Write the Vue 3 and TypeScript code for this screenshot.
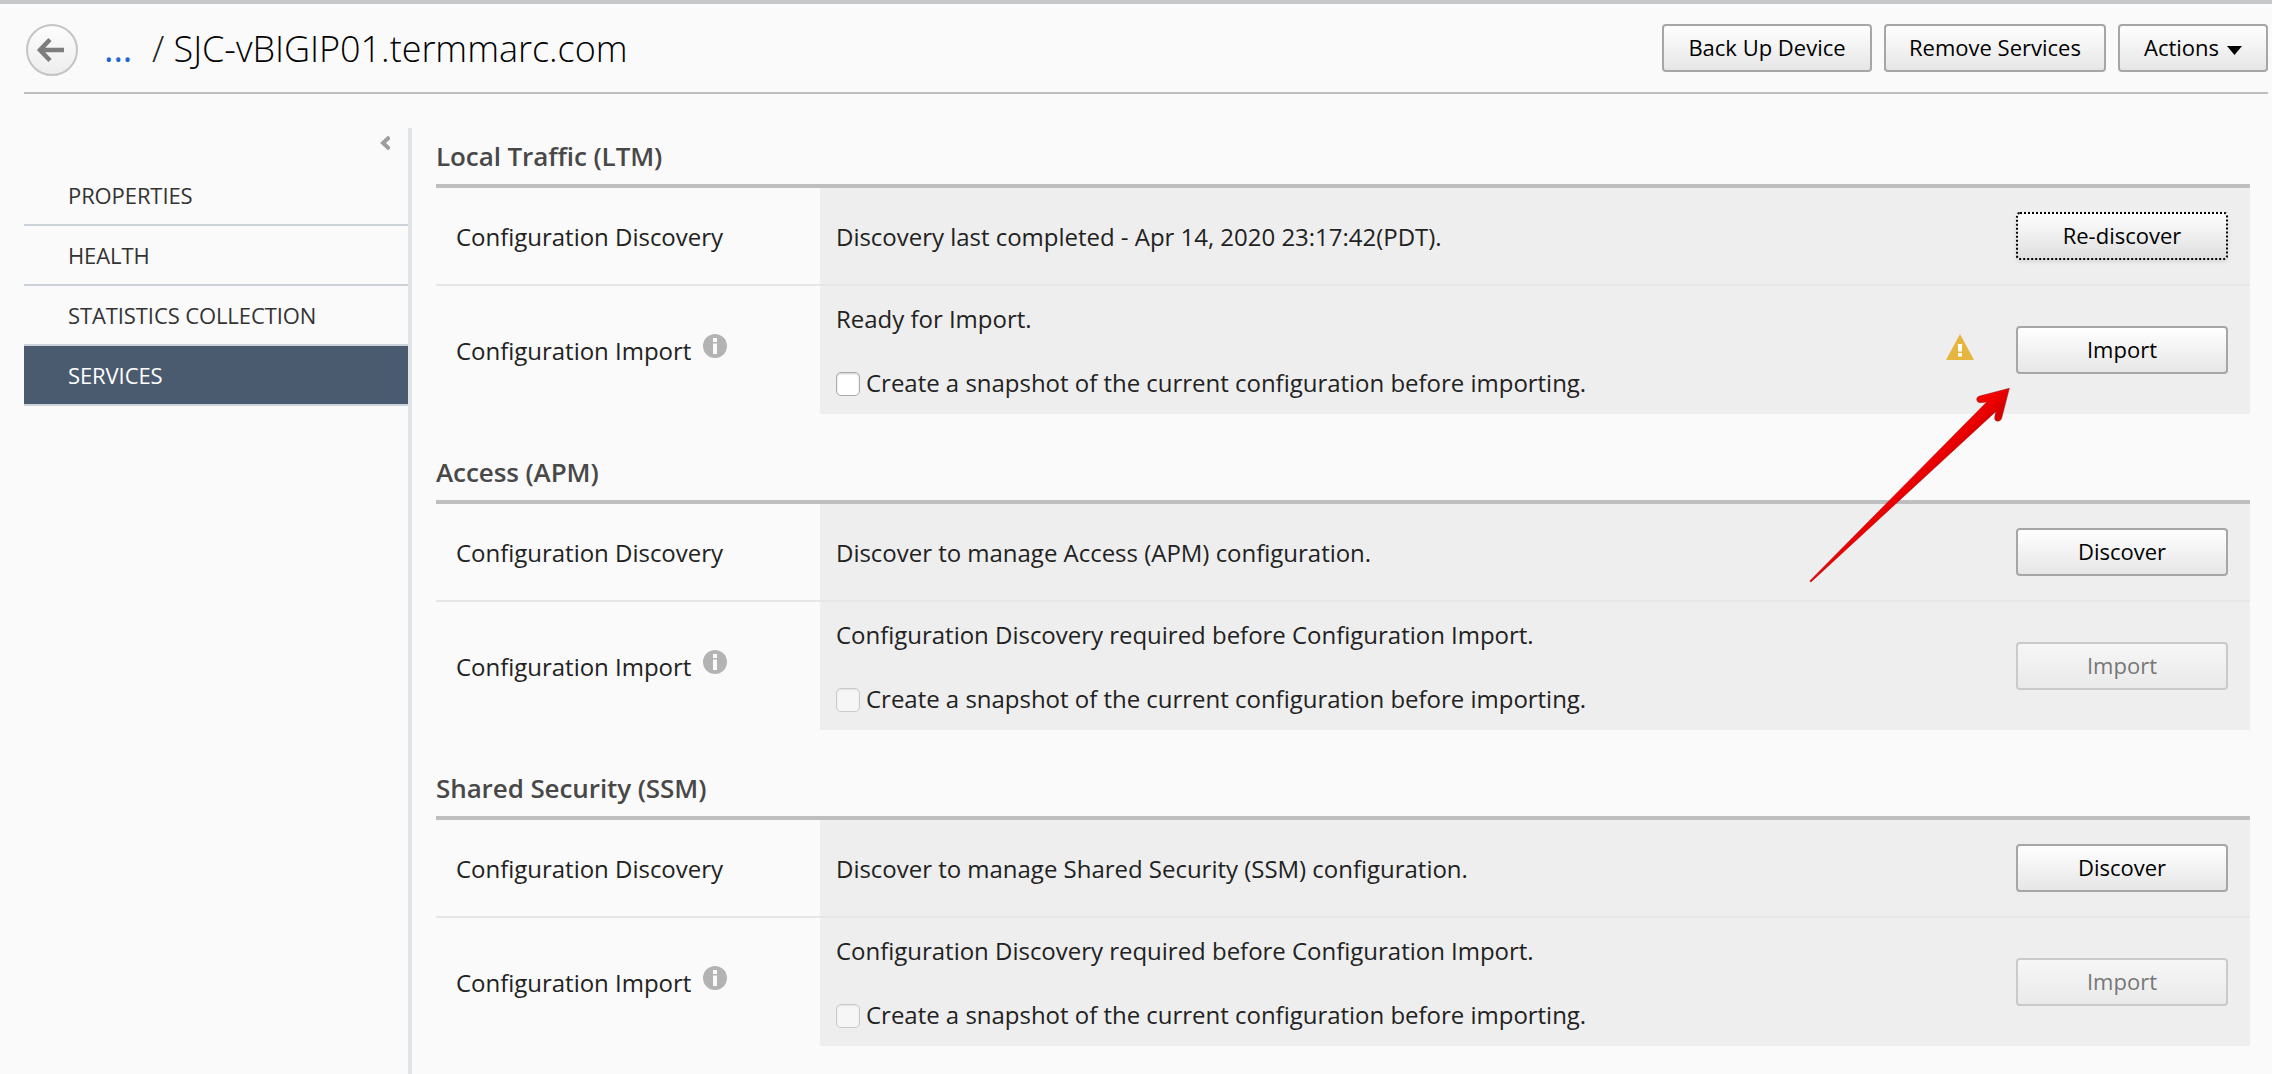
<script setup lang="ts">
import { ref } from 'vue'

interface Service {
  title: string
  discoveryStatus: string
  discoverLabel: string
  importStatus: string
  ready: boolean
  snapshot: boolean
}

const navItems: string[] = ['PROPERTIES', 'HEALTH', 'STATISTICS COLLECTION', 'SERVICES']
const activeItem = ref('SERVICES')

const services = ref<Service[]>([
  {
    title: 'Local Traffic (LTM)',
    discoveryStatus: 'Discovery last completed - Apr 14, 2020 23:17:42(PDT).',
    discoverLabel: 'Re-discover',
    importStatus: 'Ready for Import.',
    ready: true,
    snapshot: false,
  },
  {
    title: 'Access (APM)',
    discoveryStatus: 'Discover to manage Access (APM) configuration.',
    discoverLabel: 'Discover',
    importStatus: 'Configuration Discovery required before Configuration Import.',
    ready: false,
    snapshot: false,
  },
  {
    title: 'Shared Security (SSM)',
    discoveryStatus: 'Discover to manage Shared Security (SSM) configuration.',
    discoverLabel: 'Discover',
    importStatus: 'Configuration Discovery required before Configuration Import.',
    ready: false,
    snapshot: false,
  },
])
</script>

<template>
  <div class="page">
    <header class="header">
      <button class="back" aria-label="Back">
        <svg width="52" height="52" viewBox="0 0 52 52">
          <path d="M38 26H15M24 15.500L14 26l10 10.500" fill="none" stroke="#7d7d7d" stroke-width="4.500" />
        </svg>
      </button>
      <a class="crumb">...</a>
      <h1 class="title"><span class="slash">/</span> SJC-vBIGIP01.termmarc.com</h1>
      <div class="actions">
        <button class="btn backup">Back Up Device</button>
        <button class="btn remove">Remove Services</button>
        <button class="btn menu">
          Actions
          <svg width="15" height="9" viewBox="0 0 15 9"><path d="M0 0h15L7.500 9z" fill="#000" /></svg>
        </button>
      </div>
    </header>

    <div class="body">
      <aside class="sidebar">
        <div class="collapse">
          <svg width="10" height="14" viewBox="0 0 10 14">
            <path d="M9.500 1L3 7l6.500 6" fill="none" stroke="#9d9d9d" stroke-width="4" />
          </svg>
        </div>
        <nav>
          <a
            v-for="item in navItems"
            :key="item"
            class="nav-item"
            :class="{ active: item === activeItem }"
            @click="activeItem = item"
          >{{ item }}</a>
        </nav>
      </aside>

      <main class="main">
        <section v-for="service in services" :key="service.title" class="service">
          <h2 class="heading">{{ service.title }}</h2>
          <div class="row discovery">
            <div class="label">Configuration Discovery</div>
            <div class="content">
              <span class="status">{{ service.discoveryStatus }}</span>
              <button class="btn wide" :class="{ focused: service.ready }">{{ service.discoverLabel }}</button>
            </div>
          </div>
          <div class="row import">
            <div class="label">
              Configuration Import
              <svg class="info" width="24" height="24" viewBox="0 0 24 24">
                <circle cx="12" cy="12" r="12" fill="#b3b3b3" />
                <path d="M10 4h4v4h-4zM10 9.500h4V20h-4z" fill="#fafafa" />
              </svg>
            </div>
            <div class="content">
              <div class="stack">
                <span>{{ service.importStatus }}</span>
                <label class="snapshot">
                  <input v-model="service.snapshot" type="checkbox" :disabled="!service.ready" />
                  <span>Create a snapshot of the current configuration before importing.</span>
                </label>
              </div>
              <svg v-if="service.ready" class="warning" width="28" height="26" viewBox="0 0 28 26">
                <path d="M14 0L28 26H0z" fill="#e6b540" />
                <path d="M12 10h4v7.500h-4zM12 19h4v3.500h-4z" fill="#fff" />
              </svg>
              <button class="btn wide" :disabled="!service.ready">Import</button>
            </div>
          </div>
        </section>
      </main>
    </div>

    <svg class="pointer" width="210" height="204" viewBox="0 0 630 612">
      <defs>
        <linearGradient id="pointer-red" gradientUnits="userSpaceOnUse" x1="325" y1="285" x2="355" y2="315">
          <stop offset="0" stop-color="#f40000" />
          <stop offset="1" stop-color="#d90000" />
        </linearGradient>
      </defs>
      <path
        d="M21 596L551 60L532 62Q523 62 521 53Q521 44 530 42L619 19L596 109Q593 118 583 118Q574 116 575 106L578 89L25 599Q20 601 21 596Z"
        fill="url(#pointer-red)"
        stroke="#8c2020"
        stroke-width="1.500"
      />
    </svg>
  </div>
</template>

<style>
body {
  margin: 0;
  background: #fafafa;
}
</style>

<style scoped>
.page {
  position: relative;
  box-sizing: border-box;
  width: 2272px;
  height: 1074px;
  overflow: hidden;
  display: flex;
  flex-direction: column;
  border-top: 4px solid #c5c7c9;
  background: #fafafa;
  color: #222;
  font-family: 'Open Sans', 'Noto Sans', sans-serif;
  font-size: 24px;
  letter-spacing: -0.02px;
}

.header {
  box-sizing: border-box;
  height: 90px;
  margin: 0 4px 0 24px;
  padding: 20px 0 0 2px;
  border-bottom: 2px solid #bebebe;
  display: flex;
  flex: none;
  align-items: flex-start;
}

.back {
  box-sizing: border-box;
  width: 52px;
  height: 52px;
  padding: 0;
  border: 2px solid #c4c4c4;
  border-radius: 50%;
  background: linear-gradient(#fdfdfd, #ededed);
}

.back svg {
  display: block;
  margin: -2px;
}

.crumb {
  width: 48px;
  margin-left: 26px;
  color: #1f66d0;
  font-size: 36px;
  line-height: 49px;
}

.title {
  margin: 0;
  color: #000;
  font-size: 36px;
  font-weight: 300;
  letter-spacing: -0.03px;
  line-height: 49px;
  white-space: nowrap;
}

.slash {
  color: #222;
}

.actions {
  display: flex;
  gap: 12px;
  margin-left: auto;
}

.btn {
  box-sizing: border-box;
  height: 48px;
  padding: 0 0 3px;
  border: 2px solid #a6a6a6;
  border-radius: 4px;
  background: linear-gradient(#fff, #e6e6e6);
  color: #000;
  font-family: inherit;
  font-size: 22px;
  line-height: 30px;
  white-space: nowrap;
}

.backup {
  width: 210px;
}

.remove {
  width: 222px;
}

.menu {
  width: 150px;
  display: flex;
  align-items: center;
  justify-content: center;
  gap: 8px;
}

.menu svg {
  margin-top: 7px;
}

.wide {
  flex: none;
  width: 212px;
}

.focused {
  border: 2px dotted #000;
  background: linear-gradient(#fff, #dedede) border-box;
  box-shadow: 0 2px 4px rgba(0, 0, 0, 0.08);
}

.btn:disabled {
  border-color: #cacaca;
  background: linear-gradient(#f6f6f6, #eaeaea);
  color: #777;
}

.body {
  flex: 1;
  display: flex;
  padding: 34px 22px 0 24px;
}

.sidebar {
  flex: none;
  width: 384px;
  border-right: 4px solid #dfe4e9;
}

.collapse {
  box-sizing: border-box;
  height: 38px;
  padding: 8px 18px 0 0;
  display: flex;
  justify-content: flex-end;
}

.nav-item {
  box-sizing: border-box;
  display: flex;
  align-items: center;
  height: 60px;
  padding-left: 44px;
  border-bottom: 2px solid #ccd2d9;
  color: #333;
  font-size: 22px;
  letter-spacing: -0.1px;
}

.nav-item.active {
  background: #4a5b70;
  background-clip: padding-box;
  color: #fff;
}

.main {
  flex: 1;
  padding-left: 24px;
}

.service {
  margin-bottom: 30px;
}

.heading {
  margin: 0;
  height: 56px;
  border-bottom: 4px solid #bebebe;
  color: #484848;
  font-size: 26px;
  font-weight: 600;
  letter-spacing: -0.09px;
  line-height: 56px;
}

.row {
  box-sizing: border-box;
  display: flex;
}

.discovery {
  height: 98px;
  border-bottom: 2px solid #e6e6e6;
}

.import {
  height: 128px;
}

.label {
  box-sizing: border-box;
  flex: none;
  width: 384px;
  padding-left: 20px;
  display: flex;
  align-items: center;
}

.info {
  margin: 0 0 8px 12px;
}

.content {
  flex: 1;
  display: flex;
  align-items: center;
  padding: 0 22px 0 16px;
  background: #eee;
}

.status,
.stack {
  flex: 1;
}

.stack {
  display: flex;
  flex-direction: column;
  gap: 30px;
  padding-top: 2px;
  line-height: 34px;
}

.snapshot {
  display: flex;
  align-items: center;
  gap: 6px;
}

.snapshot input {
  appearance: none;
  box-sizing: border-box;
  width: 24px;
  height: 24px;
  margin: 2px 0 0;
  border: 1.5px solid #ababab;
  border-radius: 5px;
  background: #fff;
  box-shadow: inset 0 1px 2px rgba(0, 0, 0, 0.2);
}

.snapshot input:disabled {
  border-color: #cacaca;
  background: #f6f6f6;
  box-shadow: inset 0 1px 2px rgba(0, 0, 0, 0.08);
}

.warning {
  margin: 0 42px 6px 0;
}

/* annotation arrow floating over the first two sections */
.pointer {
  position: absolute;
  left: 1803px;
  top: 378px;
  pointer-events: none;
}
</style>
